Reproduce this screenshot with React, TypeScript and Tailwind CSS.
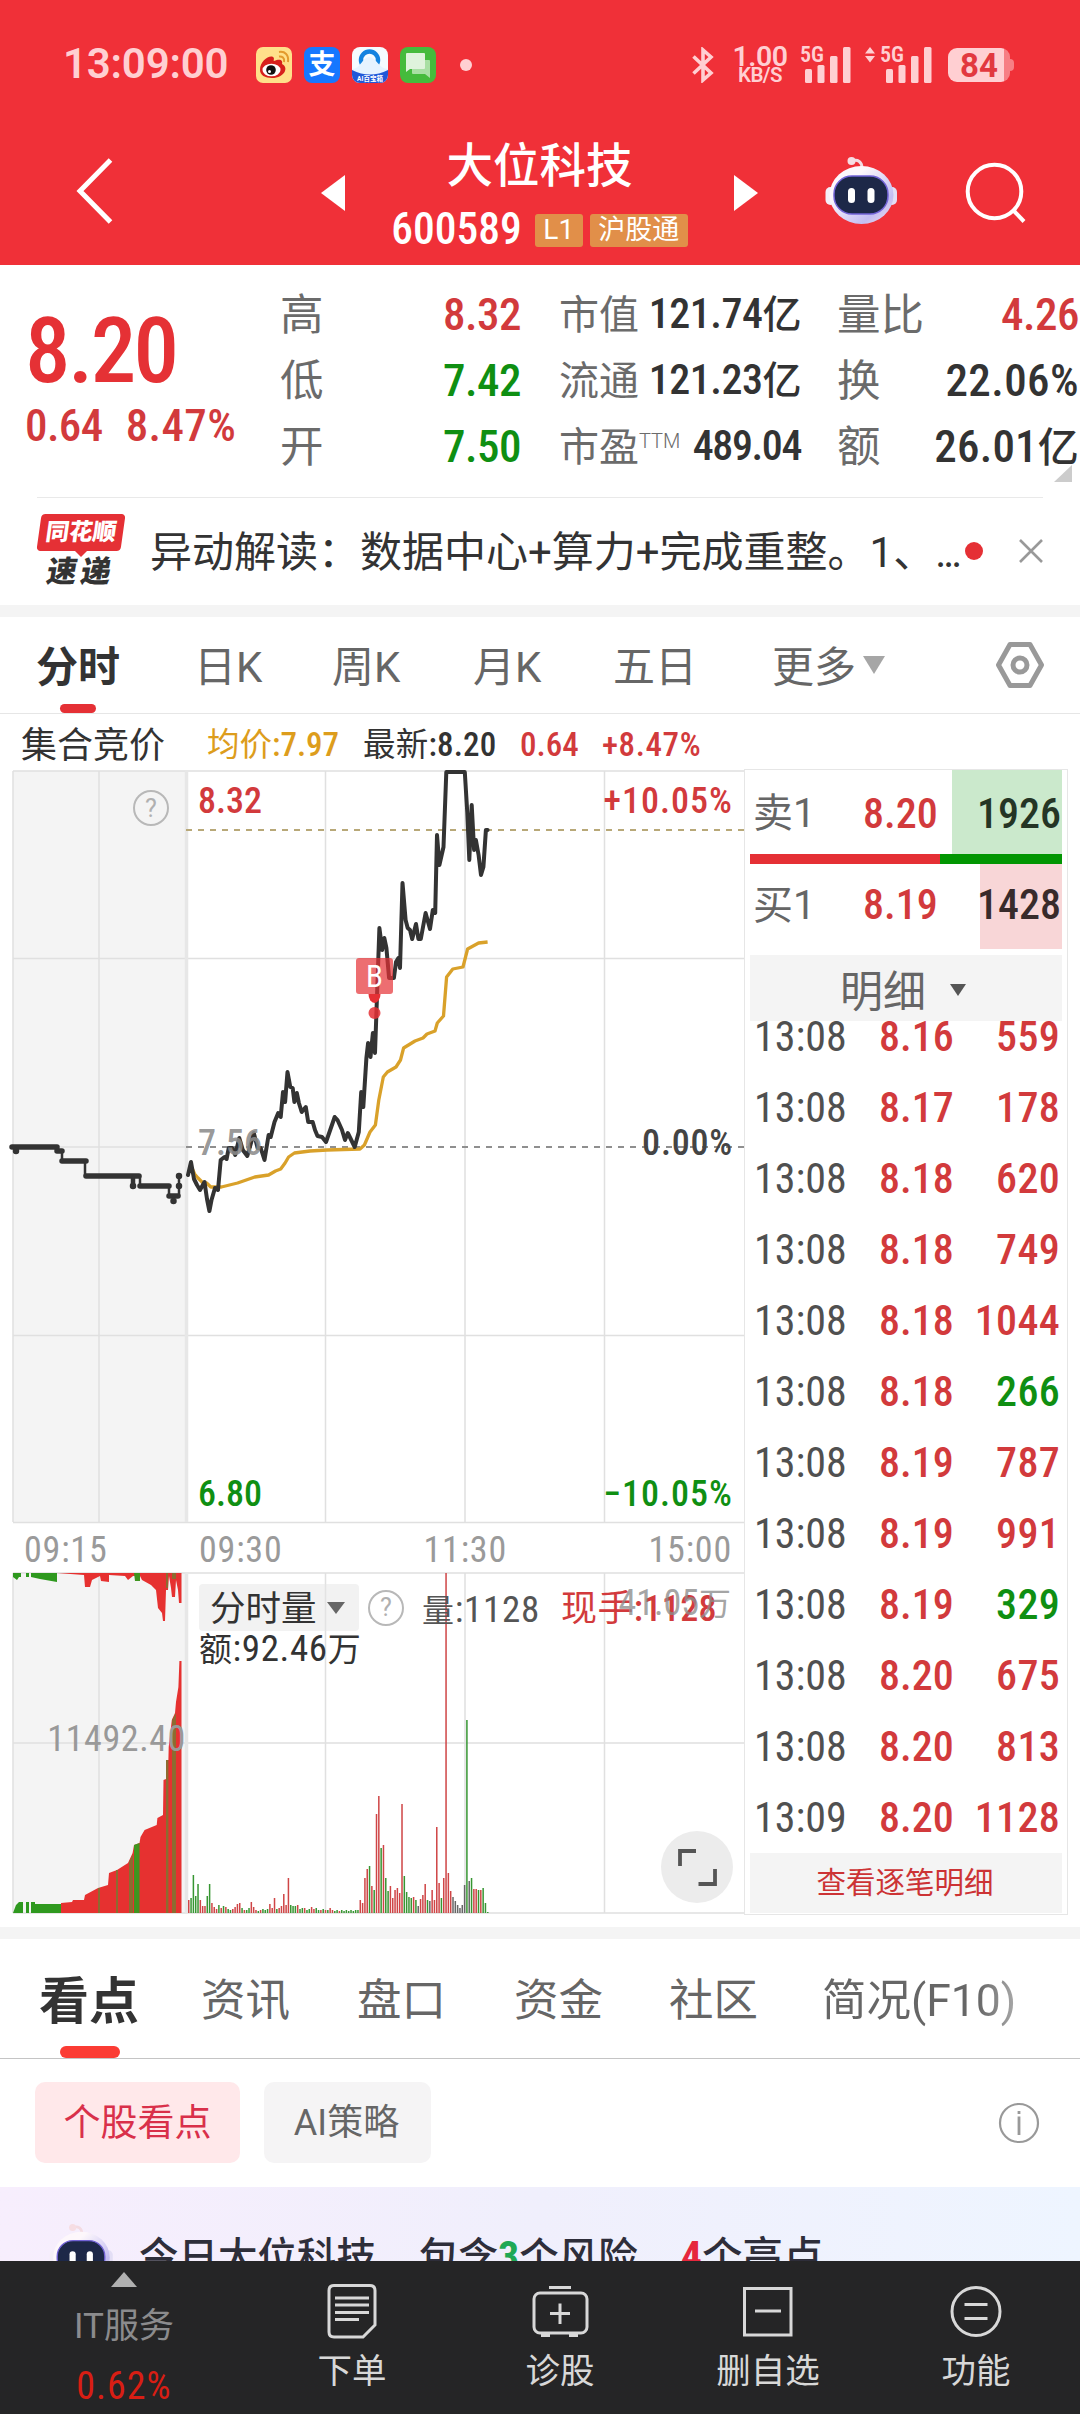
import type { ReactNode } from "react";

const RED = "text-[#d23a3c]";
const GREEN = "text-[#0f8f12]";

const trades = [
  { time: "13:08", price: "8.16", volume: "559", up: true },
  { time: "13:08", price: "8.17", volume: "178", up: true },
  { time: "13:08", price: "8.18", volume: "620", up: true },
  { time: "13:08", price: "8.18", volume: "749", up: true },
  { time: "13:08", price: "8.18", volume: "1044", up: true },
  { time: "13:08", price: "8.18", volume: "266", up: false },
  { time: "13:08", price: "8.19", volume: "787", up: true },
  { time: "13:08", price: "8.19", volume: "991", up: true },
  { time: "13:08", price: "8.19", volume: "329", up: false },
  { time: "13:08", price: "8.20", volume: "675", up: true },
  { time: "13:08", price: "8.20", volume: "813", up: true },
  { time: "13:09", price: "8.20", volume: "1128", up: true },
];

// minute volume, one entry per minute
const volumes = [
  13, 15, 38, 17, 29, 13, 7, 7, 17, 29, 10, 6, 4, 8, 5, 7, 6, 4, 3, 4, 6, 9, 10, 5, 3, 3, 5, 11, 6, 3, 2, 3, 4, 3, 4, 9,
  5, 15, 4, 5, 7, 19, 8, 35, 8, 7, 7, 8, 4, 5, 5, 3, 4, 6, 4, 5, 3, 3, 4, 3, 3, 5, 3, 2, 3, 2, 3, 2, 3, 2, 3, 2, 3, 3,
  13, 10, 35, 44, 47, 27, 23, 99, 117, 65, 68, 35, 22, 27, 15, 23, 25, 20, 109, 37, 21, 16, 15, 16, 13, 7, 14, 18, 29,
  13, 12, 23, 13, 86, 30, 15, 35, 340, 40, 22, 16, 12, 8, 5, 8, 28, 193, 32, 35, 24, 24, 23, 23, 25, 10, 1,
];
const volumeColors =
  "rggggrrrggrrrgrgrggrrrrgrggrrrgrgggrrrgrrrrrgggrggrggrrggrgrgrrggrggggggggrrrrgrgrrgrggrrrrrrggggrgkrrrgkrrrrgrrrrkkkkkkgkgrrgrgggrrrg";

const priceLine =
  "188,1175 191,1162 194,1179 197,1185 200,1190 204.5,1182 207,1199 209.4,1211 211.5,1200 215,1188 218,1190 220.7,1160 224.5,1157 226.6,1159 228.7,1148 232.4,1148 235.2,1155 239.3,1138 242.8,1150 247.3,1156 253.8,1133 257.6,1148 260.7,1148 264.5,1160 268.6,1135 270.7,1137 274.5,1122 278.2,1113 280.7,1117 283,1092 285.1,1102 287.5,1072 290.3,1087 292.7,1088 294.4,1102 296.8,1093 298.9,1103 301.7,1112 305.8,1107 308.2,1122 312.7,1122 315,1130 317.5,1136 322,1137 326,1142 329.5,1132 334.7,1117 337.5,1120 342,1130 345,1140 347.8,1133 354.7,1147 358.8,1132 361.2,1092 363.3,1107 366.4,1058 368.1,1043 370.5,1057 372.9,1033 375,1053 379.4,928 382.2,950 384.3,938 386.4,948 389.1,978 393.9,978 396,962 398.4,958 400,968 402.5,883 405.6,920 407.7,928 410,930 412.2,939 416,924 418.4,939 420.8,939 425.6,913 430,929 432.8,910 435.2,913 437,835 439.4,865 443.5,847 446.3,772 464.8,772 467.3,813 469.3,860 471.7,805 474.1,850 475.9,840 478.6,855 481,875 483.4,867 485.9,830 487.6,830";

const averageLine =
  "192,1168 194.6,1174 198,1178 203,1183 206.6,1183 210.8,1187 221.4,1187 237.6,1183 254.8,1177 268.6,1175 275.5,1171 280.7,1169 285.1,1163 288.6,1157 294.4,1153 310,1151 327,1150 360,1149 364.4,1145 370,1132 375.4,1125 378.8,1100 383.3,1077 387.4,1072 396,1067 400.5,1060 403.6,1048 415,1041 423,1038 427,1034 435,1031 437.3,1023 443.5,1016 446.6,977 452.8,969 463,967 467.6,949 478.6,943 487.6,942";

function Robot({ className }: { className: string }) {
  return (
    <svg viewBox="0 0 72 68" className={className}>
      <defs>
        <linearGradient id="shell" x1="0" y1="0" x2="1" y2="1">
          <stop offset="0.3" stopColor="#fdf7fb" />
          <stop offset="0.75" stopColor="#c3bdf2" />
          <stop offset="1" stopColor="#f6dfe8" />
        </linearGradient>
      </defs>
      <path d="M27 5 C33 3 37 6 37 12" fill="none" stroke="#f3dbe2" strokeWidth="3" />
      <circle cx="26.500" cy="5" r="4" fill="#f6dde3" />
      <rect x="0.500" y="31" width="10" height="18" rx="5" fill="#f4eef8" />
      <rect x="62" y="31" width="10" height="18" rx="5" fill="#e3def5" />
      <ellipse cx="36.500" cy="39" rx="32" ry="29" fill="url(#shell)" />
      <rect x="9" y="20" width="54" height="38" rx="18" fill="#1d2848" stroke="#7263d6" strokeWidth="1.500" />
      <rect x="23" y="32" width="7" height="15" rx="3.500" fill="#fff" />
      <rect x="42.500" y="32" width="7" height="15" rx="3.500" fill="#fff" />
    </svg>
  );
}

function Signal() {
  return (
    <svg viewBox="0 0 46 36" className="h-9 w-[46px]" fill="#ffcfd2">
      <rect x="0" y="22" width="7" height="14" rx="1.500" />
      <rect x="12.500" y="18" width="7" height="18" rx="1.500" />
      <rect x="25" y="9" width="7.500" height="27" rx="1.500" />
      <rect x="38" y="0" width="7.500" height="36" rx="1.500" />
    </svg>
  );
}

function StatusBar() {
  return (
    <div className="flex h-[130px] items-end pb-[47px] font-['Roboto','Noto_Sans_CJK_SC',sans-serif] text-[#ffcfd2]">
      <div className="flex h-9 w-full items-center">
        <span className="ml-[63px] w-[193px] pb-[2px] text-[42px] leading-none font-semibold tracking-[-0.2px]">13:09:00</span>
        <div className="flex gap-3">
          <svg viewBox="0 0 36 36" className="h-9 w-9">
            <rect width="36" height="36" rx="7" fill="#ffe08a" />
            <path d="M4 23 C4 14 13 8 17 10 C19 11 17 14 18 14 C25 11 27 14 26 17 C33 20 29 31 16 31 C9 31 4 28 4 23Z" fill="#d7201c" />
            <ellipse cx="15.500" cy="23" rx="9" ry="6.300" fill="#fff" />
            <circle cx="15" cy="23" r="4.800" fill="#111" />
            <circle cx="13.500" cy="24.500" r="1.500" fill="#fff" />
            <path d="M23 5 C29 4 33 8 32 15 M23 9.500 C26 9 29 11 28 15" fill="none" stroke="#e39a2d" strokeWidth="2" />
          </svg>
          <span className="flex h-9 w-9 items-center justify-center rounded-[8px] bg-[#1677ff] text-[27px] leading-none font-bold text-white">支</span>
          <svg viewBox="0 0 36 36" className="h-9 w-9">
            <clipPath id="app">
              <rect width="36" height="36" rx="8" />
            </clipPath>
            <g clipPath="url(#app)">
              <rect width="36" height="36" fill="#f5fbff" />
              <circle cx="17.500" cy="13" r="8.500" fill="none" stroke="#1583e0" strokeWidth="4.500" />
              <path d="M0 22 C8 22 11 10 17 10 C24 10 27 22 36 22 V28 H0Z" fill="#e6f3ff" />
              <path d="M0 23 C12 29 24 29 36 23 V36 H0Z" fill="#2158d8" />
              <text x="18" y="34" textAnchor="middle" fontSize="6.500" fontWeight="700" fill="#fff">AI百宝箱</text>
            </g>
          </svg>
          <svg viewBox="0 0 36 36" className="h-9 w-9">
            <rect width="36" height="36" rx="8" fill="#45bb3c" />
            <path d="M12 13 H29 Q30 13 30 14 V31 L25 27 H13 Q12 27 12 26Z" fill="#a8dfa3" />
            <path d="M7 6 H24 Q25 6 25 7 V21 Q25 22 24 22 H10 L6 25 V7 Q6 6 7 6Z" fill="#dff3dc" />
          </svg>
        </div>
        <span className="ml-6 h-3 w-3 rounded-full bg-[#ffcfd2]" />
        <svg viewBox="0 0 22 36" className="ml-[220px] h-9 w-[22px]">
          <path d="M1.500 9.500 L19 26 L11 33 V3 L19 10 L1.500 26.500" fill="none" stroke="#ffcfd2" strokeWidth="3.600" />
        </svg>
        <div className="ml-[17px] flex w-[58px] flex-col items-center font-semibold">
          <span className="text-[28.5px] leading-[20px] tracking-[-0.5px]">1.00</span>
          <span className="text-[20.5px] leading-[17px] tracking-[-0.6px]">KB/S</span>
        </div>
        <span className="ml-[11px] h-9 w-4 font-['Roboto_Condensed'] text-[22px] leading-[15px] font-semibold">5G</span>
        <div className="-ml-[11px]"><Signal /></div>
        <svg viewBox="0 0 10 16" className="ml-[14px] h-4 w-[10px] self-start" fill="#ffcfd2">
          <path d="M5 0 L10 6.500 H0Z M5 15.500 L10 9 H0Z" />
        </svg>
        <span className="ml-[5px] h-9 w-4 font-['Roboto_Condensed'] text-[22px] leading-[15px] font-semibold">5G</span>
        <div className="-ml-[10px]"><Signal /></div>
        <div className="ml-4 flex h-[34px] w-[62px] items-center rounded-[9px] bg-gradient-to-r from-[#ffcfd2] from-90% to-[#f77e84] to-90% pl-[12px] text-[33px] leading-none font-bold text-[#e2383f]">
          84
        </div>
        <span className="h-3 w-1 rounded-r bg-[#f77e84]" />
      </div>
    </div>
  );
}

function NavBar() {
  return (
    <div className="flex h-[135px] items-start text-white">
      <svg viewBox="0 0 40 66" className="mt-[28px] ml-[75px] h-[66px] w-10">
        <path d="M35.500 2 L5 33 L35.500 64" fill="none" stroke="#fff" strokeWidth="5" />
      </svg>
      <svg viewBox="0 0 24 36" className="mt-[45px] ml-[206px] h-9 w-6" fill="#fff">
        <path d="M24 0 V36 L0 18Z" />
      </svg>
      <div className="flex w-[389px] flex-col items-center">
        <h1 className="mt-[10px] text-[46.5px] leading-[52px] font-[450]">大位科技</h1>
        <div className="mt-[5px] flex items-center">
          <span className="mr-[13px] text-[43.5px] leading-[66px] font-medium">600589</span>
          <span className="mr-[7px] flex h-[33px] w-[48px] items-center justify-center rounded-[3px] bg-[#e18f49] font-['Roboto'] text-[28px] leading-none">L1</span>
          <span className="flex h-[33px] w-[98px] items-center justify-center rounded-[3px] bg-[#e18f49] pt-[1px] text-[27px] leading-none">沪股通</span>
        </div>
      </div>
      <svg viewBox="0 0 24 36" className="mt-[45px] h-9 w-6" fill="#fff">
        <path d="M0 0 V36 L24 18Z" />
      </svg>
      <Robot className="mt-[26px] ml-[67px] h-[68px] w-[72px]" />
      <svg viewBox="0 0 62 62" className="mt-[31px] ml-[68px] h-[62px] w-[62px]" fill="none" stroke="#fff" strokeWidth="4">
        <circle cx="29.500" cy="30.500" r="26.800" />
        <path d="M48.500 49.500 L59 60.500" />
      </svg>
    </div>
  );
}

function QuoteRow({ label, children, wide }: { label: ReactNode; children: ReactNode; wide?: boolean }) {
  return (
    <div className="flex h-[66px] items-center justify-between leading-none whitespace-nowrap">
      <span className={wide ? "pt-[3px] text-[40px] text-[#6b6b6b]" : "pt-[4px] text-[43.5px] text-[#6b6b6b]"}>{label}</span>
      <span className={wide ? "text-[42px] font-medium tracking-[-0.5px]" : "pt-[1px] text-[45px] font-medium tracking-[-0.5px]"}>{children}</span>
    </div>
  );
}

function Quote() {
  return (
    <section className="flex h-[232px] pt-4">
      <div className={`w-[280px] pl-[25px] ${RED}`}>
        <div className="mt-[16px] text-[91px] leading-[108px] font-medium tracking-[-2.6px] text-[#e53135]">8.20</div>
        <div className="flex gap-[23px] text-[45px] leading-[42px] font-medium">
          <span className="tracking-[-0.6px]">0.64</span>
          <span className="tracking-[0.4px]">8.47%</span>
        </div>
      </div>
      <div className="w-[241px]">
        <QuoteRow label="高"><span className={RED}>8.32</span></QuoteRow>
        <QuoteRow label="低"><span className={GREEN}>7.42</span></QuoteRow>
        <QuoteRow label="开"><span className={GREEN}>7.50</span></QuoteRow>
      </div>
      <div className="ml-[38px] w-[242px] text-[#333]">
        <QuoteRow wide label="市值">121.74<span className="text-[39px]">亿</span></QuoteRow>
        <QuoteRow wide label="流通">121.23<span className="text-[39px]">亿</span></QuoteRow>
        <QuoteRow wide label={<>市盈<span className="relative -top-[13px] font-['Roboto'] text-[20px] font-light">TTM</span></>}>
          <span className="tracking-[-1.4px]">489.04</span>
        </QuoteRow>
      </div>
      <div className="relative ml-[36px] w-[242px] text-[#333]">
        <QuoteRow label="量比"><span className={RED}>4.26</span></QuoteRow>
        <QuoteRow label="换"><span className="tracking-[0.4px]">22.06%</span></QuoteRow>
        <QuoteRow label="额"><span className="tracking-[0.2px]">26.01<span className="text-[41px]">亿</span></span></QuoteRow>
        <svg viewBox="0 0 18 17" className="absolute right-[7px] bottom-[15px] h-[17px] w-[18px]">
          <path d="M18 0 V17 H0Z" fill="#ccc" />
        </svg>
      </div>
    </section>
  );
}

function News() {
  return (
    <section className="mx-[37px] flex h-[108px] items-center border-t border-[#e9e9e9] pb-[2px]">
      <div className="flex w-[88px] flex-col items-center leading-none">
        <div className="flex h-[37px] w-[84px] -skew-x-[8deg] items-center justify-center rounded-[4px] bg-[#e53035] text-[23.5px] font-black text-white">
          同花顺
        </div>
        <svg viewBox="0 0 12 6" className="h-[6px] w-3"><path d="M0 0 H12 L6 6Z" fill="#e53035" /></svg>
        <div className="flex -skew-x-[10deg] gap-[4px] pr-[3px] text-[30px] leading-[30px] font-black text-[#333]">
          <span>速</span>
          <span>递</span>
        </div>
      </div>
      <p className="ml-[25px] w-[816px] pt-[4px] font-['Roboto','Noto_Sans_CJK_SC',sans-serif] text-[42px] leading-none whitespace-nowrap text-[#333]">
        异动解读：数据中心+算力+完成重整。1、<span className="tracking-[-3px]">...</span>
      </p>
      <span className="h-[18px] w-[18px] shrink-0 rounded-full bg-[#e53035]" />
      <svg viewBox="0 0 24 24" className="ml-[36px] h-6 w-6 shrink-0">
        <path d="M1 1 L23 23 M23 1 L1 23" stroke="#999" strokeWidth="2.600" />
      </svg>
    </section>
  );
}

function PeriodTabs() {
  return (
    <nav className="flex h-[97px] items-center border-b border-[#e6e6e6] font-['Roboto','Noto_Sans_CJK_SC',sans-serif] text-[42px] leading-none text-[#666]">
      <div className="relative ml-[36px] flex h-full w-[158px] items-center pt-[5px] font-bold text-[#333]">
        分时
        <span className="absolute bottom-0 left-6 h-[9px] w-9 rounded-full bg-[#e53035]" />
      </div>
      <span className="w-[138px] pt-[5px]">日K</span>
      <span className="w-[141px] pt-[5px]">周K</span>
      <span className="w-[140px] pt-[5px]">月K</span>
      <span className="w-[159px] pt-[5px]">五日</span>
      <span className="w-[91px] pt-[5px]">更多</span>
      <svg viewBox="0 0 22 18" className="h-[18px] w-[22px]"><path d="M0 0 H22 L11 18Z" fill="#a6a6a6" /></svg>
      <svg viewBox="0 0 50 48" className="ml-[110px] h-12 w-[50px]" fill="none" stroke="#999" strokeWidth="5">
        <path d="M15 3.500 H35 L46.500 24 L35 44.500 H15 L3.500 24Z" strokeLinejoin="round" />
        <circle cx="25" cy="24" r="7" />
      </svg>
    </nav>
  );
}

function Legend() {
  return (
    <div className="flex h-[55px] items-center pt-[6px] text-[33px] leading-none font-medium text-[#333]">
      <span className="ml-[21px] w-[186px] pt-[2px] text-[36px] font-normal">集合竞价</span>
      <span className="w-[156px] text-[#dd9d1c]"><span className="text-[32.5px] font-normal">均价</span>:7.97</span>
      <span className="w-[157px] tracking-[0.2px]"><span className="text-[32.5px] font-normal">最新</span>:8.20</span>
      <span className={`w-[82px] ${RED}`}>0.64</span>
      <span className={`tracking-[0.6px] ${RED}`}>+8.47%</span>
    </div>
  );
}

function HelpIcon() {
  return (
    <span className="flex h-9 w-9 items-center justify-center rounded-full border-[2.5px] border-[#b8b8b8] font-['Roboto'] text-[25px] leading-none text-[#b0b0b0]">?</span>
  );
}

function Chart() {
  const barColor: Record<string, string> = { r: "#cf4546", g: "#379632", k: "#666" };
  return (
    <div className="relative h-[1152px] w-[744px]">
      <svg viewBox="0 769 744 1152" className="h-[1152px] w-[744px] font-['Roboto_Condensed','Noto_Sans_CJK_SC',sans-serif]">
        <rect x="13" y="771" width="173" height="752" fill="#f4f4f4" />
        <rect x="13" y="1573" width="173" height="340" fill="#f4f4f4" />
        <g stroke="#e0e0e0" strokeWidth="1.500" fill="none">
          <path d="M13 771 H744 M13 958.500 H744 M13 1147 H186 M13 1335.500 H744 M13 1522.500 H744" />
          <path d="M13 771 V1522 M99 771 V1522 M325.500 771 V1522 M465 771 V1522 M604.500 771 V1522" />
          <path d="M13 1573 H744 M13 1743 H744 M13 1913 H744" />
          <path d="M13 1573 V1913 M99 1573 V1913 M325.500 1573 V1913 M465 1573 V1913 M604.500 1573 V1913" />
        </g>
        <path d="M186.500 771 V1522 M186.500 1573 V1913" stroke="#e7e7e7" strokeWidth="3.500" />
        <path d="M186 830 H744" stroke="#b8a878" strokeWidth="2" strokeDasharray="6 6" />
        <path d="M186 1147 H744" stroke="#8f8f8f" strokeWidth="2" strokeDasharray="6 6" />

        {/* call auction */}
        <g fill="none" stroke="#333" strokeLinecap="round">
          <path d="M12 1147 H57 M57 1151 H62 M62 1161 H86 M86 1176 H139 M140 1186 H169 M169 1196 H178" strokeWidth="5.500" />
          <path d="M62 1151 V1161 M85 1161 V1176 M140 1176 V1186 M169 1186 V1196 M179 1196 V1176" strokeWidth="2.500" />
          <path d="M133 1178 V1186" strokeWidth="4.500" />
          <path d="M16 1151 V1151 M133 1186 V1186 M173.500 1201 V1201 M179 1176 V1176 M179 1186 V1186" strokeWidth="6.500" />
        </g>

        <polyline points={averageLine} fill="none" stroke="#d9a12a" strokeWidth="3.300" strokeLinejoin="round" />
        <polyline points={priceLine} fill="none" stroke="#333" strokeWidth="4" strokeLinejoin="round" strokeLinecap="round" />

        <rect x="356" y="958" width="37" height="36" rx="3" fill="#e53035" fillOpacity="0.700" />
        <text x="374.500" y="987" textAnchor="middle" fontSize="31" fill="#fff">B</text>
        <path d="M368.500 994 H380.500 A6 9 0 0 1 368.500 994Z" fill="#e53035" />
        <circle cx="374.500" cy="1013" r="6" fill="#e53035" fillOpacity="0.850" />

        <g fontSize="36" fontWeight="500">
          <text x="198" y="813" fill="#d23a3c">8.32</text>
          <text x="733" y="813" textAnchor="end" letterSpacing="1" fill="#d23a3c">+10.05%</text>
          <text x="198" y="1155" fill="#8c8c8c" fillOpacity="0.900">7.56</text>
          <text x="733" y="1155" textAnchor="end" letterSpacing="0.800" fill="#444">0.00%</text>
          <text x="198" y="1506" fill="#0f8f12">6.80</text>
          <text x="733" y="1506" textAnchor="end" letterSpacing="1" fill="#0f8f12">−10.05%</text>
        </g>
        <g fontSize="36" fontWeight="450" letterSpacing="0.800" fill="#9a9a9a">
          <text x="24" y="1562">09:15</text>
          <text x="199" y="1562">09:30</text>
          <text x="507" y="1562" textAnchor="end">11:30</text>
          <text x="732" y="1562" textAnchor="end">15:00</text>
        </g>

        {/* auction volume */}
        <path d="M13 1573 V1577 L17 1580 L19 1577 H21 V1573Z M26 1573 H29 V1577 H26Z M31 1573 V1577 L40 1579 L57 1582 V1573Z" fill="#2f991f" />
        <path d="M57 1573 L84 1575 L85 1587 H90 L92 1580 L100 1576 L101 1581 L109 1582 V1575 L125 1576 L128 1580 L133 1576 H140 L142 1580 L151 1585 L156 1590 L158 1608 L162 1613 L163 1621 H165 L166 1590 H168 L169 1576 L171 1588 L172 1597 H175 L176 1580 L178 1590 L179 1603 H181.500 V1573Z" fill="#e63130" />
        <path d="M134 1573 H140 V1581 H135Z" fill="#3f951f" />
        <path d="M166 1573 H168 V1588 H166Z M172 1573 H176 V1579 H172Z" fill="#8d6b30" />
        <path d="M13 1913 L16 1905 L19 1902 H23 V1913Z M26 1902 H29 V1913 H26Z M31 1902 H35 V1904 H61 V1913 H31Z" fill="#2f991f" />
        <path d="M61 1913 V1903 L72 1902 L73 1900 H84 L85 1895 L98 1888 L108 1885 L109 1873 L117 1870 L128 1863 L132.600 1853 L134 1845 L139.500 1843 L140.500 1837 L144.600 1830 L156.700 1825 L157.400 1818 L163 1815 L163.500 1780 L166 1779 L166.600 1760 H168.400 L168.700 1747 L171.800 1720 L175 1713 L176 1702 L178.400 1687 L179.400 1661 H181.500 V1913Z" fill="#e63130" />
        <path d="M134 1913 V1845 L139.500 1843 V1913Z" fill="#3f951f" />
        <path d="M98 1913 V1888 H100 V1913Z M116 1913 V1870 H118 V1913Z M129 1913 V1862 L133 1854 V1913Z M166 1913 V1760 H168.400 V1913Z M172 1913 V1720 L176 1713 V1913Z" fill="#8d6b30" />
        <text x="186" y="1751" textAnchor="end" fontSize="36" fontWeight="450" letterSpacing="0.600" fill="#999">11492.40</text>

        {volumes.map((h, i) => (
          <rect key={i} x={188 + i * 2.318} y={1913 - h} width="1.500" height={h} fill={barColor[volumeColors[i] ?? "g"]} />
        ))}
      </svg>

      <div className="absolute top-[21px] left-[133px]"><HelpIcon /></div>

      <div className="absolute top-[815px] left-[199px] flex h-[47px] w-[545px] items-center text-[35.5px] leading-none text-[#333]">
        <span className="flex h-[47px] w-[160px] items-center rounded-[4px] bg-[#e6e6e6]/50 pt-[4px] pl-[11px]">
          分时量
          <svg viewBox="0 0 18 12" className="mb-1 ml-[10px] h-3 w-[18px]"><path d="M0 0 H18 L9 12Z" fill="#666" /></svg>
        </span>
        <span className="ml-[9px]"><HelpIcon /></span>
        <span className="ml-[18px] w-[139px] pt-[3px] text-[37px] font-[450] tracking-[0.7px] text-[#555]"><span className="text-[32px] font-normal">量</span>:1128</span>
        <span className={`pt-[3px] text-[36px] tracking-[0.4px] font-medium ${RED}`}><span className="font-normal">现手</span>:1128</span>
      </div>
      <span className="absolute top-[816px] right-[13px] text-[36px] leading-none font-[450] text-[#8c8c8c]/80">41.05<span className="text-[32px] font-normal">万</span></span>
      <span className="absolute top-[861px] left-[199px] text-[37px] leading-none font-[450] tracking-[0.6px] text-[#333]"><span className="text-[33px] font-normal">额</span>:92.46<span className="text-[33px] font-normal">万</span></span>

      <svg viewBox="0 0 72 72" className="absolute top-[1062px] left-[661px] h-[72px] w-[72px]">
        <circle cx="36" cy="36" r="36" fill="#ececec" />
        <path d="M19 35 V20 H35 M54 38 V53 H37.500" fill="none" stroke="#555" strokeWidth="3.800" />
      </svg>
    </div>
  );
}

function OrderPanel() {
  return (
    <aside className="flex h-[1146px] w-[324px] flex-col border border-[#e6e6e6] pr-[4px] pl-[5px] text-[42px] leading-none font-medium">
      <div className="flex h-[84px] items-center">
        <span className="w-[108px] pt-[4px] pl-[3px] text-[40px] font-normal text-[#666]">卖<span className="font-['Roboto']">1</span></span>
        <span className={`w-[94px] pt-[4px] pl-[5px] ${RED}`}>8.20</span>
        <span className="flex h-full w-[110px] items-center justify-end bg-[#cbe9cc] pt-[4px] pr-[1px] text-[#253525]">1926</span>
      </div>
      <div className="flex h-[10px] w-[312px]">
        <span className="w-[190px] bg-[#e53035]" />
        <span className="flex-1 bg-[#029602]" />
      </div>
      <div className="flex h-[85px] items-center">
        <span className="w-[108px] pb-[2px] pl-[3px] text-[40px] font-normal text-[#666]">买<span className="font-['Roboto']">1</span></span>
        <span className={`w-[122px] pb-[4px] pl-[5px] ${RED}`}>8.19</span>
        <span className="flex h-full w-[82px] items-center justify-end bg-[#f8d6d7] pr-[1px] pb-[4px] text-[#382b2b]">1428</span>
      </div>
      <div className="mt-[6px] flex h-[66px] w-[312px] items-center bg-[#f4f4f4] pt-[8px] pl-[90px] text-[43px] font-normal text-[#666]">
        明细
        <svg viewBox="0 0 16 12" className="mb-1 ml-6 h-3 w-4"><path d="M0 0 H16 L8 12Z" fill="#555" /></svg>
      </div>
      <div className="-mt-[20px]">
        {trades.map((t, i) => (
          <div key={i} className="flex h-[71px] w-[310px] items-center pl-[4px]">
            <span className="w-[125px] font-[450] text-[#505050]">{t.time}</span>
            <span className={RED}>{t.price}</span>
            <span className={t.up ? `ml-auto tracking-[0.3px] ${RED}` : `ml-auto tracking-[0.3px] ${GREEN}`}>{t.volume}</span>
          </div>
        ))}
      </div>
      <button className="flex h-[60px] w-[312px] items-center justify-center bg-[#f4f4f4] pt-[2px] pr-[2px] text-[29.5px] font-normal text-[#cc3335]">查看逐笔明细</button>
    </aside>
  );
}

function InfoTabs() {
  return (
    <nav className="flex h-[120px] items-center border-b border-[#c4c4c4] font-['Roboto','Noto_Sans_CJK_SC',sans-serif] text-[44.5px] leading-none text-[#666]">
      <div className="relative ml-[39px] flex h-full w-[162px] items-center pt-[7px] text-[50px] font-bold text-[#333]">
        看点
        <span className="absolute bottom-0 left-[21px] h-3 w-[60px] rounded-full bg-[#fb3c34]" />
      </div>
      <span className="w-[156px] pt-[6px]">资讯</span>
      <span className="w-[157px] pt-[6px]">盘口</span>
      <span className="w-[155px] pt-[6px]">资金</span>
      <span className="w-[153px] pt-[6px]">社区</span>
      <span className="bg-gradient-to-r from-[#666] from-80% to-[#aaa] bg-clip-text pt-[14px] pb-2 text-transparent">简况(F10)</span>
    </nav>
  );
}

function ToolItem({ label, children }: { label: string; children: ReactNode }) {
  return (
    <div className="flex w-[208px] flex-col items-center pt-[22px] text-[34.5px] leading-none text-[#d8d8d8]">
      <svg viewBox="0 0 60 56" className="h-14 w-[60px]" fill="none" stroke="#d8d8d8" strokeWidth="3">{children}</svg>
      <span className="mt-[15px]">{label}</span>
    </div>
  );
}

function BottomBar() {
  return (
    <footer className="flex h-[153px] bg-[#252526]">
      <div className="flex w-[248px] flex-col items-center pt-[11px] font-['Roboto','Noto_Sans_CJK_SC',sans-serif] leading-none">
        <svg viewBox="0 0 26 15" className="h-[15px] w-[26px]"><path d="M0 15 H26 L13 0Z" fill="#b0b0b0" /></svg>
        <span className="mt-[22px] text-[35px] text-[#8b8b8d]">IT服务</span>
        <span className="mt-[23px] font-['Roboto_Condensed'] text-[38px] tracking-[1px] text-[#d81e14]">0.62%</span>
      </div>
      <ToolItem label="下单">
        <path d="M12 2.500 H48 Q53 2.500 53 7.500 V42 L41 54 H12 Q7 54 7 49 V7.500 Q7 2.500 12 2.500Z" />
        <path d="M13 15 H47 M13 22 H47 M13 29.500 H47 M13 36.500 H37" />
      </ToolItem>
      <ToolItem label="诊股">
        <rect x="4" y="10" width="53" height="40" rx="6" />
        <path d="M19 4.500 H41 M30 20.500 V41 M20 30.500 H40 M11 52.500 H20 M39 52.500 H48" />
      </ToolItem>
      <ToolItem label="删自选">
        <rect x="6.500" y="5.500" width="46.500" height="46.500" />
        <path d="M17 28 H43" />
      </ToolItem>
      <ToolItem label="功能">
        <circle cx="30" cy="28.500" r="24" />
        <path d="M18.500 21.500 H41.500 M18.500 35.500 H41.500" />
      </ToolItem>
    </footer>
  );
}

export default function App() {
  return (
    <main className="h-[2414px] w-[1080px] overflow-hidden bg-white font-['Roboto_Condensed','Noto_Sans_CJK_SC',sans-serif]">
      <header className="h-[265px] bg-[#f03038]">
        <StatusBar />
        <NavBar />
      </header>
      <Quote />
      <News />
      <div className="h-3 bg-[#f4f4f4]" />
      <PeriodTabs />
      <Legend />
      <div className="flex h-[1158px]">
        <Chart />
        <OrderPanel />
      </div>
      <div className="h-3 bg-[#f4f4f4]" />
      <InfoTabs />
      <div className="flex h-[128px] items-center pb-[1px] font-['Roboto','Noto_Sans_CJK_SC',sans-serif] leading-none">
        <span className="ml-[35px] flex h-[81px] w-[205px] items-center justify-center rounded-[10px] bg-[#ffe8ea] pt-[1px] text-[37px] text-[#d9304a]">个股看点</span>
        <span className="ml-6 flex h-[81px] w-[167px] items-center justify-center rounded-[10px] bg-[#f5f4f5] pt-[1px] pr-[2px] text-[36px] text-[#666]">AI策略</span>
        <svg viewBox="0 0 42 42" className="ml-[567px] h-[42px] w-[42px]" fill="none" stroke="#999" strokeWidth="2.200">
          <circle cx="21" cy="21" r="19" />
          <path d="M21 14.500 V33 M21 9 V12" strokeWidth="2.800" />
        </svg>
      </div>
      <div className="flex h-[74px] overflow-hidden bg-gradient-to-r from-[#f7eefd] via-[#f0effc] to-[#eef5ff] text-[39.5px] leading-none font-[450] text-[#2e2e3a]">
        <Robot className="mt-[36px] ml-[49px] h-[60px] w-[64px] shrink-0" />
        <p className="mt-[49px] ml-[26px] whitespace-nowrap">
          今日大位科技
          <span className="ml-[43px]">包含</span><span className="text-[42px] font-bold text-[#1fa855]">3</span>个风险
          <span className="ml-[43px] text-[42px] font-bold text-[#e6273d]">4</span><span className="text-[40.5px]">个高点</span>
        </p>
      </div>
      <BottomBar />
    </main>
  );
}
